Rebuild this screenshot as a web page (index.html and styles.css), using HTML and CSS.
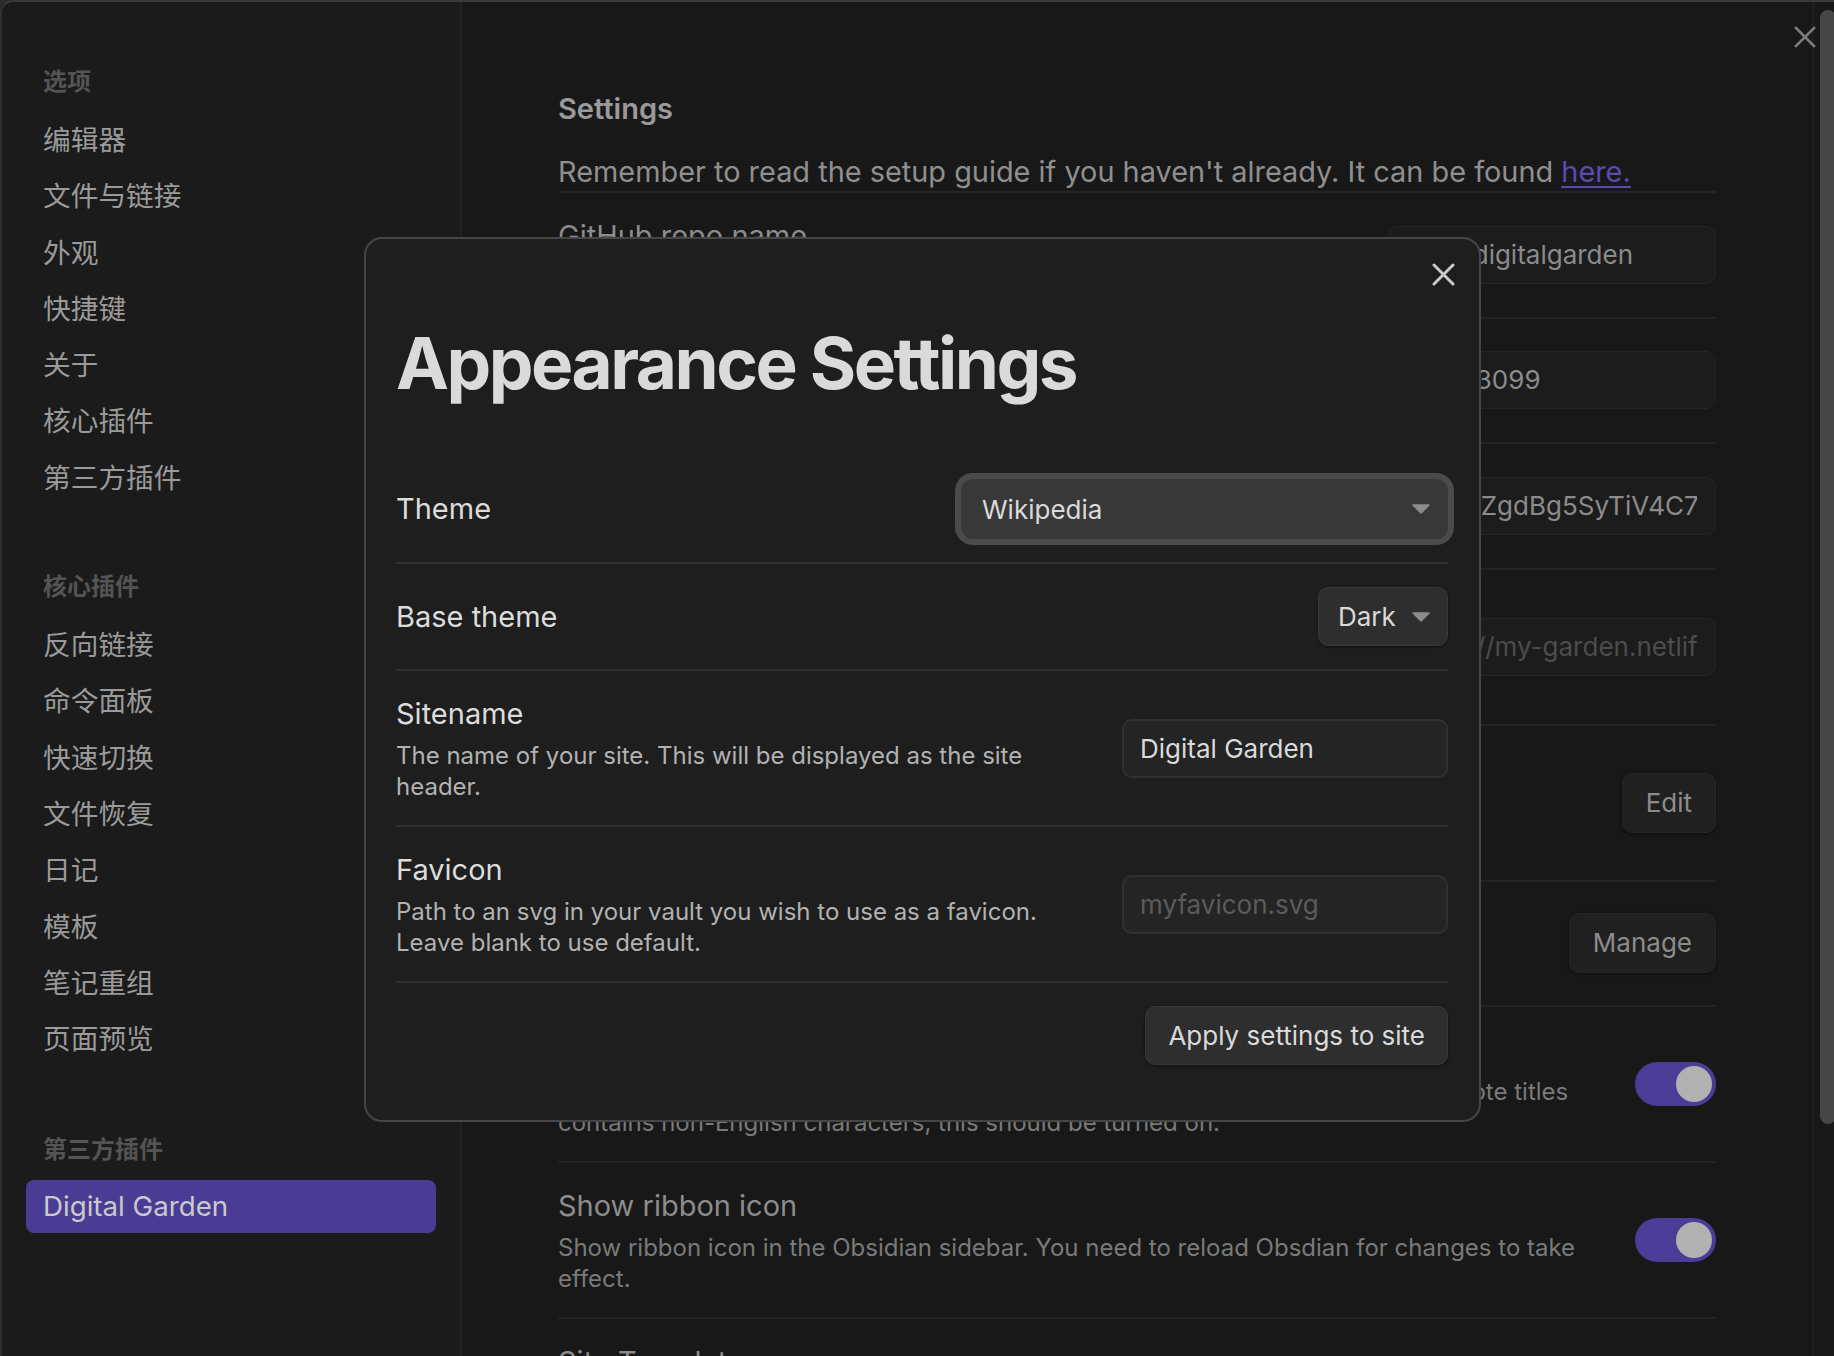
FILE: index.html
```html
<!DOCTYPE html>
<html lang="zh">
<head>
<meta charset="utf-8">
<title>Settings</title>
<link rel="stylesheet" href="styles.css">
</head>
<body>
<div class="window">
  <aside class="sidebar">
    <div class="nav-group">
      <div class="nav-header">选项</div>
      <div class="nav-item">编辑器</div>
      <div class="nav-item">文件与链接</div>
      <div class="nav-item">外观</div>
      <div class="nav-item">快捷键</div>
      <div class="nav-item">关于</div>
      <div class="nav-item">核心插件</div>
      <div class="nav-item">第三方插件</div>
    </div>
    <div class="nav-group">
      <div class="nav-header">核心插件</div>
      <div class="nav-item">反向链接</div>
      <div class="nav-item">命令面板</div>
      <div class="nav-item">快速切换</div>
      <div class="nav-item">文件恢复</div>
      <div class="nav-item">日记</div>
      <div class="nav-item">模板</div>
      <div class="nav-item">笔记重组</div>
      <div class="nav-item">页面预览</div>
    </div>
    <div class="nav-group nav-group-plugins">
      <div class="nav-header">第三方插件</div>
      <div class="nav-item is-active">Digital Garden</div>
    </div>
  </aside>

  <main class="main">
    <div class="content">
      <h2 class="page-title">Settings</h2>
      <div class="intro">Remember to read the setup guide if you haven't already. It can be found <a href="#">here.</a></div>

      <div class="bg-row">
        <div class="bg-info">
          <div class="bg-name">GitHub repo name</div>
          <div class="bg-desc">The name of the GitHub repository</div>
        </div>
        <div class="bg-input"><span class="val">blog-digitalgarden</span></div>
      </div>

      <div class="bg-row">
        <div class="bg-info">
          <div class="bg-name">GitHub Username</div>
          <div class="bg-desc">Your GitHub Username</div>
        </div>
        <div class="bg-input"><span class="val">oscar3099</span></div>
      </div>

      <div class="bg-row">
        <div class="bg-info">
          <div class="bg-name">GitHub token</div>
          <div class="bg-desc">A GitHub token with repo permissions.</div>
        </div>
        <div class="bg-input"><span class="val">ghp_5ZgdBg5SyTiV4C7</span></div>
      </div>

      <div class="bg-row">
        <div class="bg-info">
          <div class="bg-name">Base URL</div>
          <div class="bg-desc">This is optional. Used for canonical URL<br>generation.</div>
        </div>
        <div class="bg-input is-placeholder"><span class="val">https://my-garden.netlify.app</span></div>
      </div>

      <div class="bg-row">
        <div class="bg-info">
          <div class="bg-name">Appearance</div>
          <div class="bg-desc">Manage themes, sitename and styling on your<br>site.</div>
        </div>
        <div class="bg-button">Edit</div>
      </div>

      <div class="bg-row">
        <div class="bg-info">
          <div class="bg-name">Note Settings</div>
          <div class="bg-desc">Default settings for each published note.</div>
        </div>
        <div class="bg-button">Manage</div>
      </div>

      <div class="bg-row">
        <div class="bg-info">
          <div class="bg-name">Slugify Note URL</div>
          <div class="bg-desc">Transliterate and slugify the URLs of each note. Recommended if many of your note titles<br>contains non-English characters, this should be turned on.</div>
        </div>
        <div class="toggle"></div>
      </div>

      <div class="bg-row">
        <div class="bg-info">
          <div class="bg-name">Show ribbon icon</div>
          <div class="bg-desc">Show ribbon icon in the Obsidian sidebar. You need to reload Obsdian for changes to take<br>effect.</div>
        </div>
        <div class="toggle"></div>
      </div>

      <div class="bg-row">
        <div class="bg-info">
          <div class="bg-name">Site Template</div>
        </div>
      </div>
    </div>
    <div class="scroll-track"><div class="scroll-thumb"></div></div>
  </main>

  <div class="close-main">
    <svg width="22" height="22" viewBox="0 0 22 22"><path d="M2 2 L20 20 M20 2 L2 20" stroke="#7b7b7b" stroke-width="2.6" stroke-linecap="square"/></svg>
  </div>

  <div class="modal">
    <div class="modal-close">
      <svg width="23" height="23" viewBox="0 0 23 23"><path d="M2 2 L21 21 M21 2 L2 21" stroke="#cacaca" stroke-width="3" stroke-linecap="round"/></svg>
    </div>
    <h1 class="modal-title">Appearance Settings</h1>

    <div class="m-row">
      <div class="m-name">Theme</div>
      <div class="select select-wide">
        <span>Wikipedia</span>
        <svg class="arrow" width="18" height="10" viewBox="0 0 18 10"><path d="M1 1 H17 L9 9 Z" fill="#8c8c8c" stroke="#8c8c8c" stroke-width="1.5" stroke-linejoin="round"/></svg>
      </div>
    </div>

    <div class="m-row">
      <div class="m-name">Base theme</div>
      <div class="select select-small">
        <span>Dark</span>
        <svg class="arrow" width="18" height="10" viewBox="0 0 18 10"><path d="M1 1 H17 L9 9 Z" fill="#8c8c8c" stroke="#8c8c8c" stroke-width="1.5" stroke-linejoin="round"/></svg>
      </div>
    </div>

    <div class="m-row">
      <div class="m-info">
        <div class="m-name">Sitename</div>
        <div class="m-desc">The name of your site. This will be displayed as the site header.</div>
      </div>
      <div class="m-input">Digital Garden</div>
    </div>

    <div class="m-row">
      <div class="m-info">
        <div class="m-name">Favicon</div>
        <div class="m-desc">Path to an svg in your vault you wish to use as a favicon. Leave blank to use default.</div>
      </div>
      <div class="m-input is-placeholder">myfavicon.svg</div>
    </div>

    <div class="m-row m-row-last">
      <div class="m-button">Apply settings to site</div>
    </div>
  </div>
</div>
</body>
</html>
```

FILE: styles.css
```css
* { box-sizing: border-box; }

html, body {
  margin: 0;
  padding: 0;
}

body {
  width: 1834px;
  height: 1356px;
  overflow: hidden;
  background: #2c2c2c;
  font-family: Inter, "Noto Sans CJK SC", "Noto Sans", sans-serif;
  -webkit-font-smoothing: antialiased;
}

.window {
  position: relative;
  height: 1356px;
  border-top: 2px solid #393939;
  border-left: 2px solid #303030;
  border-top-left-radius: 14px;
  background: #181818;
  display: grid;
  grid-template-columns: 460px 1fr;
  overflow: hidden;
}

/* ---------- sidebar ---------- */
.sidebar {
  background: #1b1b1b;
  border-right: 2px solid #222222;
  padding: 64px 24px 0 24px;
  display: flex;
  flex-direction: column;
  gap: 65px;
}

.nav-group {
  display: flex;
  flex-direction: column;
}

.nav-group-plugins {
  margin-top: 2px;
}

.nav-header {
  height: 32px;
  line-height: 32px;
  padding-left: 17px;
  margin-bottom: 14px;
  font-size: 24px;
  font-weight: 600;
  color: #545454;
}

.nav-item {
  height: 56.3px;
  line-height: 56px;
  padding-left: 17px;
  font-size: 27.7px;
  color: #9a9a9a;
  border-radius: 8px;
}

.nav-item.is-active {
  height: 53px;
  line-height: 53px;
  margin-top: 0;
  background: #4a3c94;
  color: #c9c9c9;
}

/* ---------- main ---------- */
.main {
  display: flex;
  justify-content: space-between;
  background: #181818;
}

.content {
  width: 1158px;
  margin-left: 96px;
  padding-top: 87px;
}

.page-title {
  margin: 0;
  height: 40px;
  line-height: 40px;
  font-size: 29px;
  font-weight: 600;
  color: #9a9a9a;
}

.intro {
  margin-top: 24px;
  height: 40px;
  line-height: 38px;
  font-size: 28.9px;
  color: #8f8f8f;
  border-bottom: 2px solid #242424;
}

.intro a {
  color: #5a4bb0;
  text-decoration: underline;
  text-decoration-thickness: 2px;
  text-underline-offset: 4px;
}

.bg-row {
  display: flex;
  align-items: center;
  justify-content: space-between;
  gap: 40px;
  padding: 23px 0;
  border-bottom: 2px solid #232323;
}

.bg-info {
  flex: 1;
  min-width: 0;
}

.bg-name {
  height: 40px;
  line-height: 40px;
  font-size: 29px;
  color: #8c8c8c;
}

.bg-desc {
  margin-top: 7px;
  font-size: 24px;
  line-height: 30.5px;
  color: #7a7a7a;
  white-space: nowrap;
}

.bg-input {
  flex: none;
  width: 328px;
  height: 58px;
  padding: 0 18px;
  border: 1.5px solid #252525;
  border-radius: 10px;
  background: #1c1c1c;
  font-size: 26px;
  color: #8b8b8b;
}

.bg-input .val {
  display: block;
  line-height: 55px;
  white-space: nowrap;
  overflow: hidden;
}

.bg-input.is-placeholder {
  color: #4c4c4c;
}

.bg-button {
  flex: none;
  height: 60px;
  line-height: 58px;
  padding: 0 23px;
  border: 1px solid #262626;
  border-radius: 10px;
  background: #202020;
  box-shadow: 0 1px 3px rgba(0, 0, 0, 0.5);
  font-size: 26px;
  color: #8c8c8c;
}

.toggle {
  position: relative;
  flex: none;
  width: 81px;
  height: 44px;
  border-radius: 22px;
  background: #4a3c97;
}

.toggle::after {
  content: "";
  position: absolute;
  right: 4px;
  top: 4px;
  width: 36px;
  height: 36px;
  border-radius: 50%;
  background: #b1b1b1;
}

.scroll-track {
  width: 22px;
  border-left: 2px solid #1f1f1f;
  padding: 8px 0 0 6px;
}

.scroll-thumb {
  width: 16px;
  height: 1114px;
  border-radius: 8px;
  background: #464646;
}

.close-main {
  position: absolute;
  left: 1792px;
  top: 24px;
  width: 22px;
  height: 22px;
  display: flex;
}

/* ---------- modal ---------- */
.modal {
  position: absolute;
  left: 362px;
  top: 235px;
  width: 1117px;
  height: 885px;
  padding: 81px 31px 0 30px;
  background: #1e1e1e;
  border: 2px solid #464646;
  border-radius: 18px;
}

.modal-close {
  position: absolute;
  left: 1066px;
  top: 24px;
  width: 23px;
  height: 23px;
  display: flex;
}

.modal-title {
  margin: 0 0 50px 0;
  height: 86px;
  line-height: 86px;
  font-size: 71px;
  font-weight: 700;
  letter-spacing: -0.035em;
  color: #dadada;
}

.m-row {
  display: flex;
  align-items: center;
  justify-content: space-between;
  gap: 40px;
  padding: 23px 0;
  border-bottom: 2px solid #303030;
}

.m-row-last {
  border-bottom: none;
  justify-content: flex-end;
}

.m-info {
  flex: 1;
  min-width: 0;
}

.m-name {
  height: 40px;
  line-height: 40px;
  font-size: 29px;
  color: #dcdcdc;
}

.m-desc {
  margin-top: 7px;
  max-width: 660px;
  font-size: 24px;
  line-height: 30.5px;
  color: #b2b2b2;
}

.select {
  flex: none;
  display: flex;
  align-items: center;
  justify-content: space-between;
  font-size: 26px;
  color: #dadada;
}

.select-wide {
  width: 487px;
  height: 60px;
  padding: 0 18px 0 21px;
  border-radius: 12px;
  background: #383838;
  box-shadow: 0 0 0 6px #4b4b4b;
}

.select-small {
  width: 130px;
  height: 59px;
  padding: 0 17px 0 19px;
  border: 1px solid #383838;
  border-radius: 10px;
  background: #2e2e2e;
  box-shadow: 0 1px 3px rgba(0, 0, 0, 0.5);
}

.arrow {
  flex: none;
}

.m-input {
  flex: none;
  width: 326px;
  height: 59px;
  line-height: 55px;
  padding: 0 16px;
  border: 2px solid #303030;
  border-radius: 10px;
  background: #242424;
  font-size: 26px;
  color: #dadada;
  white-space: nowrap;
  overflow: hidden;
}

.m-input.is-placeholder {
  color: #5b5b5b;
}

.m-button {
  height: 59px;
  line-height: 57px;
  padding: 0 22px;
  border: 1px solid #383838;
  border-radius: 10px;
  background: #2e2e2e;
  box-shadow: 0 1px 3px rgba(0, 0, 0, 0.5);
  font-size: 26px;
  color: #dadada;
}
```
